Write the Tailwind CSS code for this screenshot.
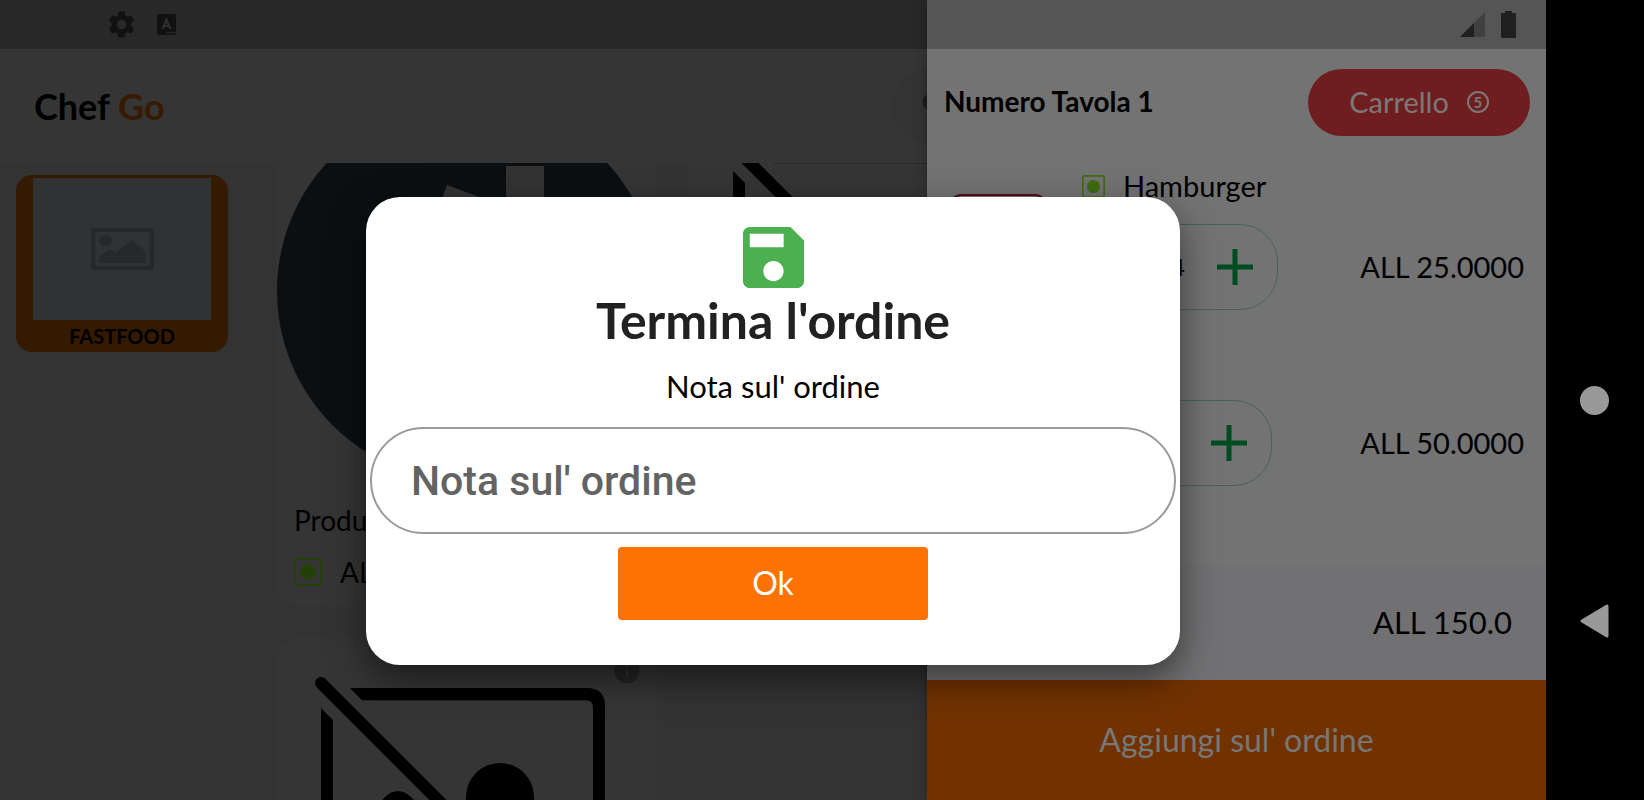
<!DOCTYPE html>
<html lang="it">
<head>
<meta charset="utf-8">
<meta name="viewport" content="width=device-width, initial-scale=1">
<title>Chef Go</title>
<script src="https://cdn.jsdelivr.net/npm/@tailwindcss/browser@4"></script>
</head>
<body class="flex h-screen overflow-hidden bg-black font-['Lato',sans-serif] text-black">

<svg class="hidden" aria-hidden="true">
  <symbol id="no-image" viewBox="0 0 380 380">
    <path d="M44 45 L335 336" stroke="#000" stroke-width="12" stroke-linecap="round"/>
    <path d="M44 70 L56 82 V304 H278 L290 316 H62 Q44 316 44 298Z"/>
    <path d="M73 50 H310 Q328 50 328 68 V304 L316 292 V70 Q316 62.200 309 62.200 H85Z"/>
    <circle cx="223" cy="159" r="34"/>
    <path d="M76 284 V194 L108 159 Q121 147 134 159 L258 284Z"/>
  </symbol>
  <symbol id="veg" viewBox="0 0 28 28">
    <rect x="1" y="1" width="26" height="26" rx="2" fill="none" stroke="currentColor" stroke-width="2"/>
    <circle cx="14" cy="14" r="8" fill="currentColor"/>
  </symbol>
  <symbol id="plus" viewBox="0 0 36 36"><path d="M15.500 0h5v15.500H36v5H20.500V36h-5V20.500H0v-5h15.500z"/></symbol>
</svg>

<div class="relative flex min-w-0 flex-1 flex-col overflow-hidden bg-[#333333]">
  <div class="flex h-[49px] shrink-0 items-center gap-[22px] bg-[#282828] pl-[108px] text-[#111111]">
    <svg class="size-[27px]" viewBox="2 2 20 20" fill="currentColor"><path d="M19.140 12.940c.04-.3.060-.61.060-.94 0-.32-.02-.64-.07-.94l2.030-1.580c.18-.14.23-.41.12-.61l-1.920-3.320c-.12-.22-.37-.29-.59-.22l-2.390.96c-.5-.38-1.030-.7-1.620-.94l-.36-2.540c-.04-.24-.24-.41-.48-.41h-3.840c-.24 0-.43.17-.47.41l-.36 2.540c-.59.24-1.130.57-1.620.94l-2.390-.96c-.22-.08-.47 0-.59.22L2.740 8.870c-.12.21-.08.47.12.61l2.030 1.580c-.05.3-.09.63-.09.94s.02.64.07.94l-2.030 1.580c-.18.14-.23.41-.12.61l1.920 3.320c.12.22.37.29.59.22l2.390-.96c.5.38 1.030.7 1.620.94l.36 2.540c.05.24.24.41.48.41h3.840c.24 0 .44-.17.47-.41l.36-2.540c.59-.24 1.130-.56 1.620-.94l2.390.96c.22.08.47 0 .59-.22l1.920-3.320c.12-.22.07-.47-.12-.61l-2.010-1.580zM12 15.600A3.600 3.600 0 1 1 12 8.400a3.600 3.600 0 0 1 0 7.200z"/></svg>
    <svg class="h-[21px] w-[19px]" viewBox="0 0 19 21"><rect width="19" height="21" rx="2" fill="currentColor"/><path d="M5.500 15 9.500 5.500 13.500 15M7 12h5" fill="none" stroke="#303030" stroke-width="2"/><path d="M10 18.500h8" stroke="#303030" stroke-width="1.500" stroke-dasharray="2 1"/></svg>
  </div>

  <header class="flex h-[114px] shrink-0 items-center bg-[#353535] pr-[580px] pl-[34px]">
    <h1 class="text-[36px] leading-[40px] font-bold">Chef <span class="text-[#371a00]">Go</span></h1>
    <button class="ml-auto flex size-[74px] items-center justify-center rounded-full bg-[#333333] pb-1 pl-2" aria-label="Cerca">
      <svg class="size-6" viewBox="0 0 24 24" fill="none" stroke="#1b1b1b" stroke-width="5"><circle cx="10" cy="10" r="6"/><path d="m15 15 6 6"/></svg>
    </button>
  </header>

  <div class="flex min-h-0 flex-1">
    <nav class="w-[277px] shrink-0 px-4 pt-3">
      <button class="flex h-[177px] w-[212px] flex-col items-center rounded-2xl bg-[#341a00] pt-[3px]">
        <span class="flex h-[144px] w-[178px] items-center justify-center bg-[#313234]">
          <svg class="h-[42px] w-[63px]" viewBox="0 0 63 42" fill="#272829"><path fill-rule="evenodd" d="M3 0h57q3 0 3 3v36q0 3-3 3H3q-3 0-3-3V3q0-3 3-3zM4.500 4v34h54V4z"/><ellipse cx="14.500" cy="12.500" rx="6.500" ry="5.500"/><path d="M8 35V29l11-8 5 4 17-13 14 12v11z"/></svg>
        </span>
        <span class="text-[20px] leading-[32px] font-bold">FASTFOOD</span>
      </button>
    </nav>

    <main class="min-w-0 flex-1 overflow-hidden">
      <div class="-mt-[62px] grid grid-cols-[380px_380px] gap-8">
        <article class="h-[505px] rounded-[20px] bg-[#353535]">
          <svg class="block size-[380px]" viewBox="0 0 380 380"><circle cx="190" cy="190" r="190" fill="#0b0f11"/><path d="M229 65h38v160h-38zM170 84l35 13-40 105-35-13z" fill="#333333"/></svg>
          <div class="px-[17px] pt-[22px]">
            <h2 class="text-[28px] leading-[34px]">Product</h2>
            <p class="mt-5 flex items-center gap-[18px] text-[28px] leading-[30px]"><svg class="size-7 text-[#24400a]"><use href="#veg"/></svg>ALL 25.0000</p>
          </div>
        </article>
        <article class="h-[505px] rounded-[20px] bg-[#353535]">
          <svg class="block size-[380px]"><use href="#no-image"/></svg>
        </article>
        <article class="relative h-[505px] rounded-[20px] bg-[#353535]">
          <svg class="block size-[380px]"><use href="#no-image"/></svg>
          <svg class="absolute top-5 right-[17px] size-[26px]" viewBox="0 0 26 26"><circle cx="13" cy="13" r="12.500" fill="#242424"/><path d="M13 11.500v8M13 6.500v2.500" stroke="#333333" stroke-width="2"/></svg>
        </article>
      </div>
    </main>
  </div>

  <aside class="absolute inset-y-0 right-0 flex w-[40%] min-w-[619px] flex-col bg-[#737373] shadow-[0_0_12px_rgba(0,0,0,0.3)]">
    <div class="flex h-[49px] shrink-0 items-center justify-end gap-4 bg-[#555555] pr-[30px]">
      <svg class="size-[25px]" viewBox="0 0 25 25"><path d="M0 25 25 0V25Z" fill="#404040"/><path d="M0 25 14 11V25Z" fill="#202020"/></svg>
      <svg class="h-[27px] w-[15px]" viewBox="0 0 15 27" fill="#202020"><path d="M4 0h7v2h3q1 0 1 1v23q0 1-1 1H1q-1 0-1-1V3q0-1 1-1h3z"/></svg>
    </div>
    <div class="flex h-[114px] shrink-0 items-start justify-between pt-5 pr-4 pl-[17px]">
      <h2 class="text-[28px] leading-[65px] font-bold">Numero Tavola 1</h2>
      <button class="flex h-[67px] w-[222px] items-center justify-center gap-[18px] rounded-full bg-[#6f1d1e] pb-px text-[29px] text-[#7a7a7a]">Carrello
        <span class="flex size-[22px] items-center justify-center rounded-full border-2 border-[#7a7a7a] text-[15px] leading-none font-bold">5</span>
      </button>
    </div>

    <ul class="min-h-0 flex-1 overflow-hidden">
      <li class="flex h-[176px]">
        <div class="w-[155px] shrink-0 pt-[31px] pl-[22px]"><div class="h-[110px] w-[98px] rounded-xl border-2 border-[#560b1c]"></div></div>
        <div class="min-w-0 flex-1">
          <div class="flex h-[46px] items-center gap-[18px] text-[29px]"><svg class="size-[23px] text-[#3f6b10]"><use href="#veg"/></svg>Hamburger</div>
          <div class="mt-[15px] flex items-center justify-between pr-[22px]">
            <div class="flex h-[86px] w-[196px] items-center justify-between rounded-[38px] border border-[#486356] px-6 text-2xl">
              <button class="flex h-9 w-8 items-center" aria-label="Diminuisci"><span class="h-[5px] w-8 bg-[#004d22]"></span></button>4
              <button aria-label="Aumenta"><svg class="size-9 fill-[#004d22]"><use href="#plus"/></svg></button>
            </div>
            <span class="text-[29px]">ALL 25.0000</span>
          </div>
        </div>
      </li>
      <li class="flex h-[176px] pl-[155px]">
        <div class="mt-[61px] flex h-[86px] min-w-0 flex-1 items-center justify-between pr-[22px]">
          <div class="flex h-[86px] w-[190px] items-center justify-between rounded-[38px] border border-[#486356] px-6 text-2xl">
            <button class="flex h-9 w-8 items-center" aria-label="Diminuisci"><span class="h-[5px] w-8 bg-[#004d22]"></span></button><span class="pr-2">1</span>
            <button aria-label="Aumenta"><svg class="size-9 fill-[#004d22]"><use href="#plus"/></svg></button>
          </div>
          <span class="text-[29px]">ALL 50.0000</span>
        </div>
      </li>
    </ul>

    <div class="flex h-[115px] shrink-0 items-center justify-end bg-[#717173] pr-[34px] text-[31px]">ALL 150.0</div>
    <button class="h-[120px] shrink-0 bg-[#723200] text-[32px] text-[#777777]">Aggiungi sul' ordine</button>
  </aside>

  <div class="absolute inset-0 flex items-center justify-center pt-[62px]">
    <form role="dialog" aria-labelledby="title" class="flex w-[814px] flex-col items-center rounded-[34px] bg-white px-1 pt-[30px] pb-[45px] shadow-[0_14px_36px_rgba(0,0,0,0.5)]">
      <svg class="size-[61px]" viewBox="3 3 18 18" fill="#4caf50"><path d="M17 3H5c-1.110 0-2 .9-2 2v14c0 1.100.89 2 2 2h14c1.100 0 2-.9 2-2V7l-4-4zm-5 16c-1.660 0-3-1.340-3-3s1.340-3 3-3 3 1.340 3 3-1.340 3-3 3zm3-10H5V5h10v4z"/></svg>
      <h2 id="title" class="mt-1 text-[50px] leading-[56px] font-bold text-[#212121]">Termina l'ordine</h2>
      <label for="note" class="mt-[18px] text-[31px] leading-[40px]">Nota sul' ordine</label>
      <input id="note" type="text" placeholder="Nota sul' ordine" class="mt-[21px] h-[107px] w-full rounded-full border-2 border-[#9a9a9a] px-[39px] font-['Roboto',sans-serif] text-[41px] font-medium outline-none placeholder:text-[#636363]">
      <button type="button" class="mt-[13px] h-[73px] w-[310px] rounded bg-[#fd7204] pb-0.5 text-[32px] text-white">Ok</button>
    </form>
  </div>
</div>

<nav class="flex w-[98px] shrink-0 flex-col items-center pr-0.5 pt-[386px]">
  <button class="size-[29px] rounded-full bg-[#999999]" aria-label="Home"></button>
  <button class="mt-[189px]" aria-label="Indietro"><svg class="h-[34px] w-[29px]" viewBox="0 0 29 34"><path d="M2 17 27 2V32Z" fill="#999999" stroke="#999999" stroke-width="3" stroke-linejoin="round"/></svg></button>
</nav>
</body>
</html>
